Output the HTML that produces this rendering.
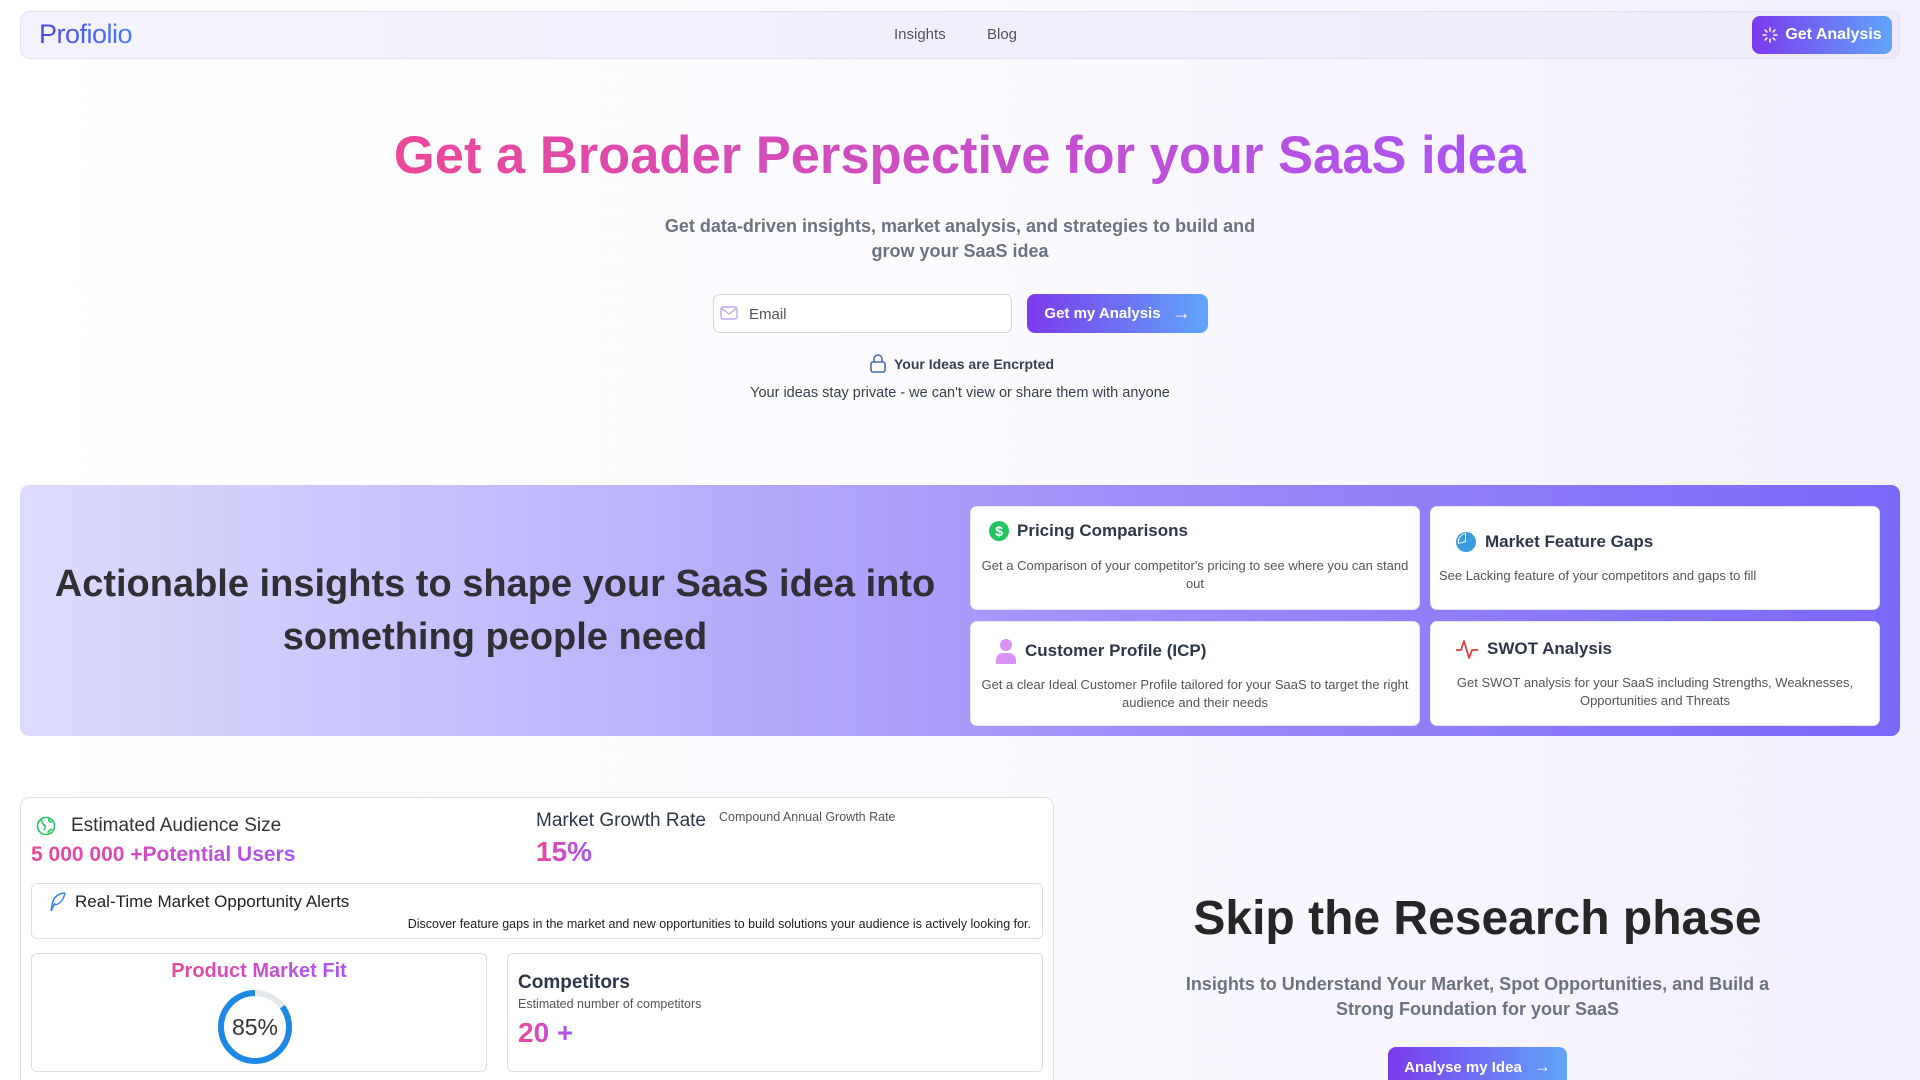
<!DOCTYPE html>
<html style="width:1920px;height:1080px;overflow:hidden"><head><meta charset="utf-8">
<style>
*{margin:0;padding:0;box-sizing:border-box}
body{width:1920px;height:1080px;overflow:hidden;font-family:"Liberation Sans",sans-serif;background:linear-gradient(90deg,#ffffff 0%,#fbfaff 50%,#f3effd 100%);position:relative;color:#333}
.a{position:absolute}
.nav{left:20px;top:11px;width:1880px;height:48px;border:1px solid #e4e0f0;border-radius:10px;background:linear-gradient(90deg,#f4f3fd,#efeafb)}
.grad{background:linear-gradient(90deg,#ec4899,#a855f7);-webkit-background-clip:text;background-clip:text;color:transparent}
.btn{background:linear-gradient(90deg,#7c3aed,#60a5fa);color:#fff;border-radius:8px;font-weight:bold;display:flex;align-items:center;justify-content:center}
.card{background:#fff;border-radius:7px;border:1px solid #e5e7eb;text-align:center;padding:0 8px}
.card h4{font-size:17px;color:#2d3748;display:flex;align-items:center;gap:8px;text-align:left}
.card p{font-size:13px;color:#555;line-height:18px}
.box{border:1px solid #dedfe3;border-radius:6px;background:#fff}
</style></head><body>
<div class="a nav"></div>
<div class="a" style="left:39px;top:19px;font-size:27px;letter-spacing:-0.5px;background:linear-gradient(90deg,#5046e5,#4a7cf0);-webkit-background-clip:text;color:transparent">Profiolio</div>
<div class="a" style="left:894px;top:26px;font-size:15px;color:#555">Insights</div>
<div class="a" style="left:987px;top:26px;font-size:15px;color:#555">Blog</div>
<div class="a btn" style="left:1752px;top:16px;width:140px;height:38px;font-size:16px;gap:7px"><svg width="16" height="16" viewBox="0 0 16 16" stroke="#fff" stroke-width="1.5" stroke-linecap="round"><path d="M8 1v3M8 12v3M1 8h3M12 8h3M3 3l2 2M11 11l2 2M3 13l2-2M11 5l2-2"/></svg>Get Analysis</div>

<div class="a" style="left:0;width:1920px;top:124px;text-align:center;font-size:52.5px;font-weight:bold;line-height:64px"><span class="grad">Get a Broader Perspective for your SaaS idea</span></div>
<div class="a" style="left:650px;width:620px;top:214px;text-align:center;font-size:18px;line-height:25px;color:#6b7280;font-weight:bold">Get data-driven insights, market analysis, and strategies to build and grow your SaaS idea</div>

<div class="a" style="left:713px;top:294px;width:299px;height:39px;border:1px solid #d1d5db;border-radius:7px;background:#fff"></div>
<svg class="a" style="left:720px;top:306px" width="18" height="14" viewBox="0 0 18 14" fill="none" stroke="#c4a6f0" stroke-width="1.4"><rect x="1" y="1" width="16" height="12" rx="2"/><path d="M1 2l8 6 8-6"/></svg>
<div class="a" style="left:749px;top:306px;font-size:15px;color:#555">Email</div>
<div class="a btn" style="left:1027px;top:294px;width:181px;height:39px;font-size:15px;gap:12px">Get my Analysis <span style="font-size:18px">→</span></div>

<svg class="a" style="left:869px;top:354px" width="18" height="20" viewBox="0 0 18 20" fill="none" stroke="#4b6ab0" stroke-width="1.6"><rect x="2" y="8" width="14" height="10" rx="2"/><path d="M5 8V5a4 4 0 0 1 8 0v3"/></svg>
<div class="a" style="left:894px;top:356px;font-size:14px;color:#374151;font-weight:bold">Your Ideas are Encrpted</div>
<div class="a" style="left:0;width:1920px;top:385px;text-align:center;font-size:14.5px;color:#374151">Your ideas stay private - we can't view or share them with anyone</div>

<div class="a" style="left:20px;top:485px;width:1880px;height:251px;border-radius:9px;background:linear-gradient(90deg,#dedcfd 0%,#b9b1fb 35%,#9d8cf9 60%,#7a68f8 100%)"></div>
<div class="a" style="left:40px;width:910px;top:558px;text-align:center;font-size:38px;line-height:53px;font-weight:bold;color:#2f2f35">Actionable insights to shape your SaaS idea into something people need</div>

<div class="a card" style="left:970px;top:506px;width:450px;height:104px">
<h4 style="margin:14px 0 0 10px"><svg width="20" height="20" viewBox="0 0 20 20"><circle cx="10" cy="10" r="10" fill="#22c55e"/><text x="10" y="15" font-size="14" font-weight="bold" fill="#fff" text-anchor="middle" font-family="Liberation Sans">$</text></svg>Pricing Comparisons</h4>
<p style="margin-top:16px">Get a Comparison of your competitor's pricing to see where you can stand out</p></div>
<div class="a card" style="left:1430px;top:506px;width:450px;height:104px">
<h4 style="margin:24px 0 0 16px"><svg width="22" height="22" viewBox="0 0 22 22"><circle cx="11" cy="11" r="10" fill="#3b9de0"/><path d="M11 2a9 9 0 0 0-8 11l8-2z" fill="#fff" opacity=".9"/><path d="M10 3a8 8 0 0 0-6 9l6-2z" fill="#3b9de0"/></svg>Market Feature Gaps</h4>
<p style="margin-top:14px;text-align:left">See Lacking feature of your competitors and gaps to fill</p></div>
<div class="a card" style="left:970px;top:621px;width:450px;height:105px">
<h4 style="margin:16px 0 0 16px"><svg width="22" height="26" viewBox="0 0 22 26"><circle cx="11" cy="7" r="6" fill="#d893f5"/><path d="M1 26v-4a7 7 0 0 1 7-7h6a7 7 0 0 1 7 7v4z" fill="#d893f5"/></svg>Customer Profile (ICP)</h4>
<p style="margin-top:12px">Get a clear Ideal Customer Profile tailored for your SaaS to target the right audience and their needs</p></div>
<div class="a card" style="left:1430px;top:621px;width:450px;height:105px">
<h4 style="margin:16px 0 0 16px"><svg width="24" height="22" viewBox="0 0 24 22" fill="none" stroke="#e53e3e" stroke-width="1.8" stroke-linejoin="round"><path d="M1 12h5l3-9 5 17 3-8h6"/></svg>SWOT Analysis</h4>
<p style="margin-top:14px">Get SWOT analysis for your SaaS including Strengths, Weaknesses, Opportunities and Threats</p></div>

<div class="a box" style="left:20px;top:797px;width:1034px;height:290px;border-radius:9px"></div>
<svg class="a" style="left:36px;top:816px" width="20" height="20" viewBox="0 0 20 20" fill="none" stroke="#22c55e" stroke-width="1.6"><circle cx="10" cy="10" r="8.5"/><path d="M5 4c2 2 1 4 3 5s1 3 0 5M13 3c-1 2 1 3 3 3M12 17c0-2 2-3 4-4"/></svg>
<div class="a" style="left:71px;top:815px;font-size:19px;color:#333">Estimated Audience Size</div>
<div class="a" style="left:31px;top:843px;font-size:21px;font-weight:bold"><span class="grad">5 000 000 +Potential Users</span></div>
<div class="a" style="left:536px;top:810px;font-size:19px;color:#2d3748">Market Growth Rate</div>
<div class="a" style="left:719px;top:810px;font-size:12.5px;color:#555">Compound Annual Growth Rate</div>
<div class="a" style="left:536px;top:836px;font-size:28px;font-weight:bold"><span class="grad">15%</span></div>

<div class="a box" style="left:31px;top:883px;width:1012px;height:56px"></div>
<svg class="a" style="left:47px;top:891px" width="20" height="22" viewBox="0 0 20 22" fill="none" stroke="#3b82f6" stroke-width="1.5"><path d="M18 2c-6 0-12 4-13 12l-1 6M6 14c5 0 10-3 12-12M4 20l4-8"/></svg>
<div class="a" style="left:75px;top:892px;font-size:17px;color:#222">Real-Time Market Opportunity Alerts</div>
<div class="a" style="left:31px;width:1000px;top:917px;text-align:right;font-size:12.5px;color:#222">Discover feature gaps in the market and new opportunities to build solutions your audience is actively looking for.</div>

<div class="a box" style="left:31px;top:953px;width:456px;height:119px"></div>
<div class="a" style="left:31px;width:456px;top:960px;text-align:center;font-size:20px;font-weight:bold"><span class="grad">Product Market Fit</span></div>
<svg class="a" style="left:216px;top:988px" width="78" height="78" viewBox="0 0 78 78"><circle cx="39" cy="39" r="34" fill="none" stroke="#e5e7eb" stroke-width="6"/><circle cx="39" cy="39" r="34" fill="none" stroke="#1e88e5" stroke-width="6" stroke-dasharray="181.6 213.6" transform="rotate(-90 39 39) scale(1,-1) translate(0,-78)"/><text x="39" y="47" font-size="23" text-anchor="middle" fill="#333" font-family="Liberation Sans">85%</text></svg>

<div class="a box" style="left:507px;top:953px;width:536px;height:119px"></div>
<div class="a" style="left:518px;top:972px;font-size:19px;color:#2d3748;font-weight:bold">Competitors</div>
<div class="a" style="left:518px;top:997px;font-size:12.5px;color:#555">Estimated number of competitors</div>
<div class="a" style="left:518px;top:1017px;font-size:28px;font-weight:bold"><span class="grad">20 +</span></div>

<div class="a" style="left:1090px;width:775px;top:891px;text-align:center;font-size:48px;font-weight:bold;color:#262626">Skip the Research phase</div>
<div class="a" style="left:1170px;width:615px;top:972px;text-align:center;font-size:18px;line-height:25px;color:#6b7280;font-weight:bold">Insights to Understand Your Market, Spot Opportunities, and Build a Strong Foundation for your SaaS</div>
<div class="a btn" style="left:1388px;top:1047px;width:179px;height:33px;border-radius:8px 8px 0 0;font-size:15px;gap:12px;align-items:flex-start;padding-top:12px">Analyse my Idea <span style="font-size:17px;line-height:16px">→</span></div>
</body></html>
